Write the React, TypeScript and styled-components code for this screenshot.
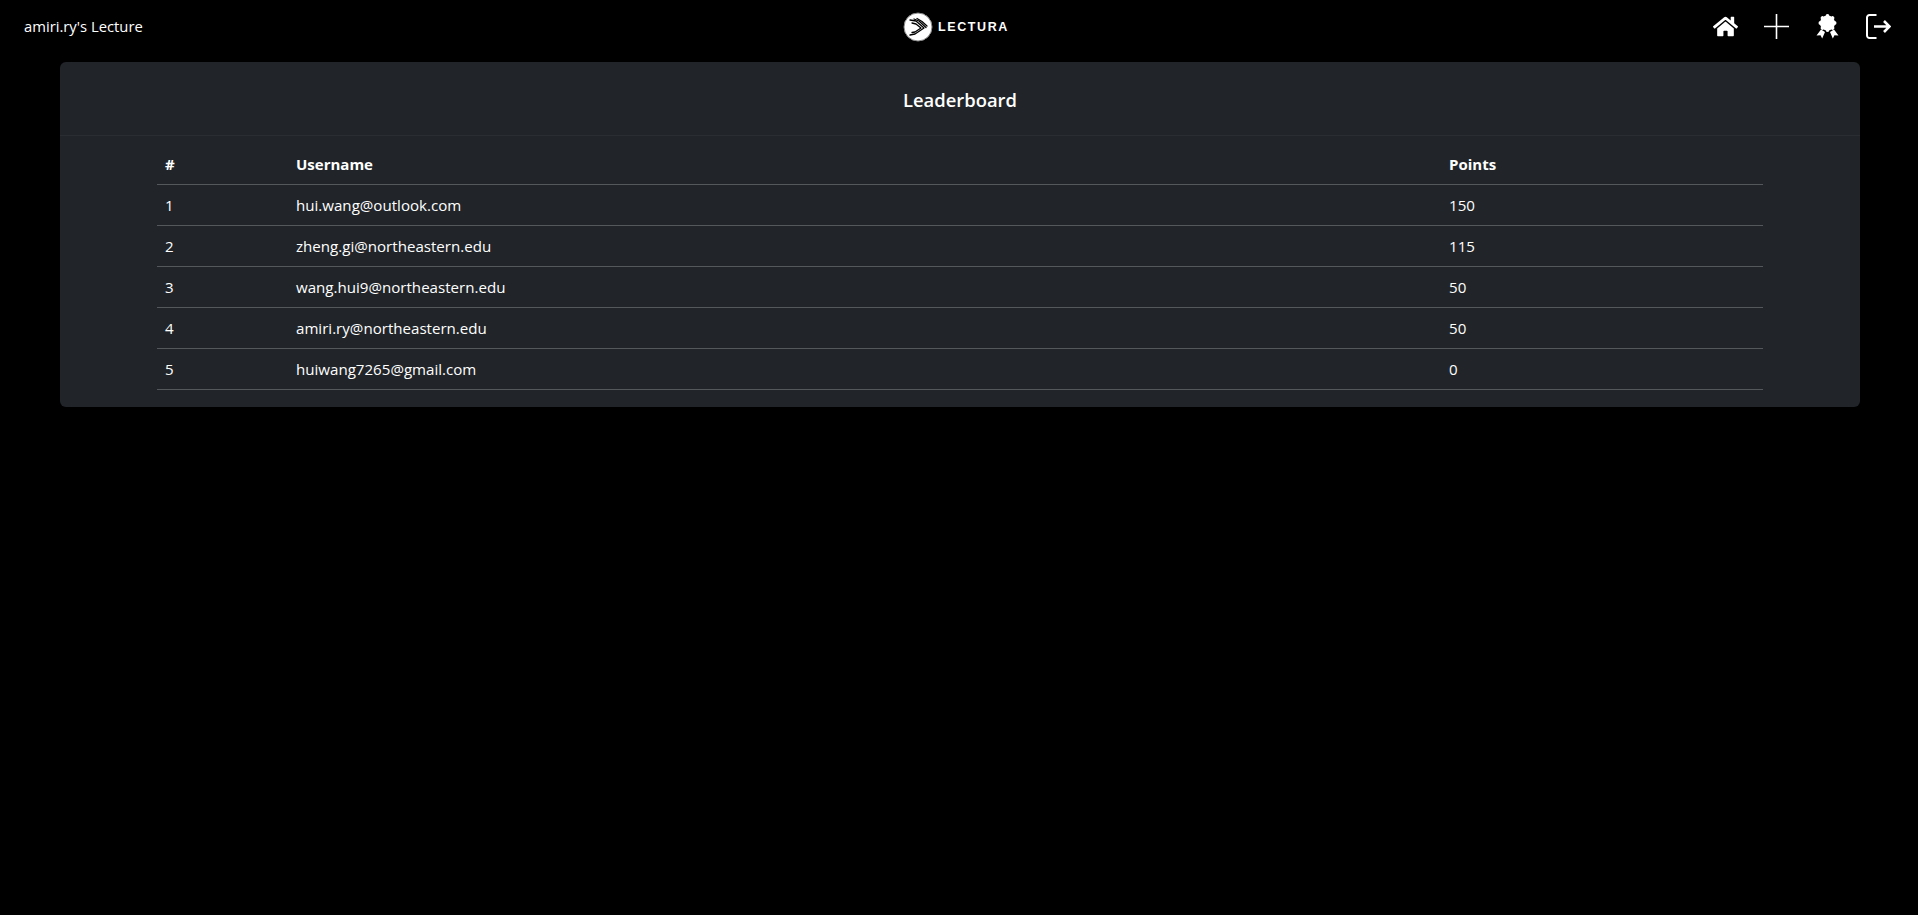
import styled, { createGlobalStyle } from 'styled-components'
import { FaHome } from 'react-icons/fa'

const GlobalStyle = createGlobalStyle`
  *, *::before, *::after {
    box-sizing: border-box;
  }
  html, body {
    margin: 0;
    min-height: 100%;
    background: #000;
  }
  body {
    font-family: "Open Sans", "Noto Sans", "Liberation Sans", sans-serif;
    font-size: 15px;
    color: #fff;
  }
`

// ---- Navbar ----
const Navbar = styled.nav`
  display: grid;
  grid-template-columns: 1fr auto 1fr;
  align-items: center;
  height: 52px;
  padding: 0 24px;
  margin-bottom: 10px;
`

const Brand = styled.span`
  font-size: 14.8px;
  line-height: 52px;
`

const LogoLink = styled.div`
  display: flex;
  align-items: center;
  gap: 5px;
  padding-top: 1px;
  margin-right: 6px;
`

const LogoText = styled.span`
  font-family: "Liberation Sans", sans-serif;
  font-size: 12.5px;
  font-weight: 700;
  letter-spacing: 1.6px;
`

const NavIcons = styled.div`
  display: flex;
  justify-content: flex-end;
  align-items: center;
  gap: 26px;
  padding-top: 1px;
  margin-right: 3px;
  color: #fff;
`

const IconButton = styled.button`
  display: flex;
  align-items: center;
  justify-content: center;
  width: 25px;
  padding: 0;
  border: 0;
  background: none;
  color: inherit;
  cursor: pointer;
`

// ---- Card ----
const Card = styled.section`
  margin: 0 58px 0 60px;
  background: #212529;
  border-radius: 6px;
  overflow: hidden;
`

const CardHeader = styled.header`
  height: 74px;
  padding-top: 4px;
  border-bottom: 1px solid #2a2d31;
  display: flex;
  align-items: center;
  justify-content: center;
`

const CardTitle = styled.h5`
  margin: 0;
  font-size: 18.4px;
  font-weight: 600;
  line-height: 1.2;
`

const CardBody = styled.div`
  padding: 7px 97px 17px;
`

const Table = styled.table`
  width: 100%;
  border-collapse: collapse;
  table-layout: fixed;
`

const Th = styled.th<{ $width: number }>`
  width: ${({ $width }) => $width}px;
  height: 41px;
  padding: 2px 8px 0;
  text-align: left;
  font-size: 15px;
  font-weight: 700;
  border-bottom: 1px solid #55585b;
`

const Td = styled.td`
  height: 41px;
  padding: 0 8px;
  font-size: 15.1px;
  border-bottom: 1px solid #55585b;
`

const rows = [
  { username: 'hui.wang@outlook.com', points: 150 },
  { username: 'zheng.gi@northeastern.edu', points: 115 },
  { username: 'wang.hui9@northeastern.edu', points: 50 },
  { username: 'amiri.ry@northeastern.edu', points: 50 },
  { username: 'huiwang7265@gmail.com', points: 0 },
]

const LogoMark = () => (
  <svg width="30" height="30" viewBox="0 0 30 30">
    <circle cx="15" cy="15" r="14" fill="#fff" stroke="#888" strokeWidth="1" />
    <g fill="none" stroke="#000" strokeWidth="1.3" strokeLinecap="round" strokeLinejoin="round">
      <path d="M7 8 L13 9 L21 16 L12 22 L7 23" />
      <path d="M9 11 L13 12 L18 16 L12 20 L9 20.5" />
      <path d="M11 7 L16 9 L23 15.5" />
      <path d="M14 6.5 L19 9.5 L24 14" />
    </g>
  </svg>
)

const PlusIcon = () => (
  <svg width="25" height="25" viewBox="0 0 25 25">
    <path d="M12.5 0 V25 M0 12.5 H25" stroke="currentColor" strokeWidth="1.6" />
  </svg>
)

const AwardIcon = () => (
  <svg width="23" height="25" viewBox="0.5 0 23 25" fill="currentColor">
    <circle cx="12" cy="9" r="7.6" />
    <g>
      {[0, 45, 90, 135, 180, 225, 270, 315].map((deg) => (
        <circle key={deg} cx="12" cy="1.9" r="1.9" transform={`rotate(${deg} 12 9)`} />
      ))}
    </g>
    <path d="M5.5 15.5 L9.5 18 L6.7 24.5 L5 21.3 L1 21.6 Z" />
    <path d="M18.5 15.5 L14.5 18 L17.3 24.5 L19 21.3 L23 21.6 Z" />
  </svg>
)

const LogoutIcon = () => (
  <svg width="25" height="25" viewBox="0 0 25 25" fill="none">
    <path d="M10.5 1 H3.5 A2.5 2.5 0 0 0 1 3.5 V21.5 A2.5 2.5 0 0 0 3.5 24 H10.5" stroke="currentColor" strokeWidth="2" />
    <path d="M8 12.5 H23.5 M18 7 L23.5 12.5 L18 18" stroke="currentColor" strokeWidth="2.6" />
  </svg>
)

export default function App() {
  return (
    <>
      <GlobalStyle />
      <Navbar>
        <Brand>amiri.ry's Lecture</Brand>
        <LogoLink>
          <LogoMark />
          <LogoText>LECTURA</LogoText>
        </LogoLink>
        <NavIcons>
          <IconButton aria-label="Home"><FaHome size={25} /></IconButton>
          <IconButton aria-label="New lecture"><PlusIcon /></IconButton>
          <IconButton aria-label="Leaderboard"><AwardIcon /></IconButton>
          <IconButton aria-label="Log out"><LogoutIcon /></IconButton>
        </NavIcons>
      </Navbar>

      <Card>
        <CardHeader>
          <CardTitle>Leaderboard</CardTitle>
        </CardHeader>
        <CardBody>
          <Table>
            <thead>
              <tr>
                <Th $width={131}>#</Th>
                <Th $width={1153}>Username</Th>
                <Th $width={322}>Points</Th>
              </tr>
            </thead>
            <tbody>
              {rows.map((row, i) => (
                <tr key={row.username}>
                  <Td>{i + 1}</Td>
                  <Td>{row.username}</Td>
                  <Td>{row.points}</Td>
                </tr>
              ))}
            </tbody>
          </Table>
        </CardBody>
      </Card>
    </>
  )
}
